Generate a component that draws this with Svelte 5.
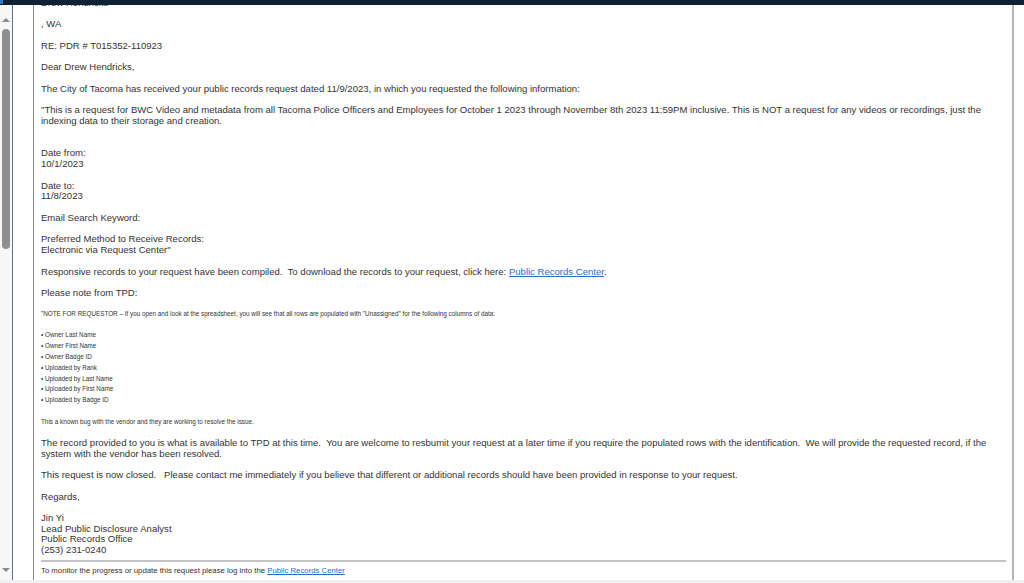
<script lang="ts">
const fieldNames: string[] = [
  'Owner Last Name',
  'Owner First Name',
  'Owner Badge ID',
  'Uploaded by Rank',
  'Uploaded by Last Name',
  'Uploaded by First Name',
  'Uploaded by Badge ID',
];
</script>

<div class="page">
  <div class="topbar"><span class="tab-chip"></span></div>
  <div class="main">
    <div class="scrollbar">
      <span class="arrow up"></span>
      <div class="track"><div class="thumb"></div></div>
      <span class="arrow down"></span>
    </div>
    <div class="gutter"></div>
    <div class="message">
      <div class="body">
        <p class="cut">Drew Hendricks</p>
        <p>, WA</p>
        <p>RE: PDR # T015352-110923</p>
        <p>Dear Drew Hendricks,</p>
        <p>The City of Tacoma has received your public records request dated 11/9/2023, in which you requested the following information:</p>
        <p class="gap-2">"This is a request for BWC Video and metadata from all Tacoma Police Officers and Employees for October 1 2023 through November 8th 2023 11:59PM inclusive. This is NOT a request for any videos or recordings, just the indexing data to their storage and creation.</p>
        <p>Date from:<br />10/1/2023</p>
        <p>Date to:<br />11/8/2023</p>
        <p>Email Search Keyword:</p>
        <p>Preferred Method to Receive Records:<br />Electronic via Request Center"</p>
        <p>Responsive records to your request have been compiled.&nbsp; To download the records to your request, click here: <a href="#top">Public Records Center</a>.</p>
        <p>Please note from TPD:</p>
        <div class="note">
          <p>"NOTE FOR REQUESTOR – If you open and look at the spreadsheet, you will see that all rows are populated with "Unassigned" for the following columns of data:</p>
          <ul>
            {#each fieldNames as name}
              <li>• {name}</li>
            {/each}
          </ul>
          <p>This a known bug with the vendor and they are working to resolve the issue.</p>
        </div>
        <p>The record provided to you is what is available to TPD at this time.&nbsp; You are welcome to resbumit your request at a later time if you require the populated rows with the identification.&nbsp; We will provide the requested record, if the system with the vendor has been resolved.</p>
        <p>This request is now closed.&nbsp;&nbsp; Please contact me immediately if you believe that different or additional records should have been provided in response to your request.</p>
        <p>Regards,</p>
        <p class="sig">Jin Yi<br />Lead Public Disclosure Analyst<br />Public Records Office<br />(253) 231-0240</p>
      </div>
      <div class="footer">To monitor the progress or update this request please log into the <a href="#top">Public Records Center</a></div>
    </div>
    <div class="right"></div>
  </div>
  <div class="bottom"></div>
</div>

<style>
:global(body) {
  margin: 0;
  background: #fff;
}

.page {
  width: 1024px;
  height: 583px;
  display: flex;
  flex-direction: column;
  overflow: hidden;
  font-family: "Liberation Sans", Arial, sans-serif;
  color: #333;
}

.topbar {
  height: 5px;
  flex-shrink: 0;
  background: #0f2135;
  position: relative;
  z-index: 1;
}

.tab-chip {
  display: block;
  width: 3px;
  height: 4px;
  background: #2f78c4;
}

.main {
  flex: 1;
  min-height: 0;
  display: flex;
  overflow: hidden;
}

.scrollbar {
  width: 12px;
  flex-shrink: 0;
  background: #f7f7f7;
  border-right: 1px solid #5f7386;
  display: flex;
  flex-direction: column;
  align-items: center;
}

.arrow {
  width: 0;
  height: 0;
  flex-shrink: 0;
  border-left: 4px solid transparent;
  border-right: 4px solid transparent;
}

.arrow.up {
  margin-top: 13px;
  border-bottom: 4px solid #8a8a8a;
}

.arrow.down {
  margin-bottom: 8px;
  border-top: 4px solid #8a8a8a;
}

.track {
  flex: 1;
  align-self: stretch;
  padding: 7px 2px 0;
}

.thumb {
  height: 220px;
  border-radius: 4px;
  background: #8f8f8f;
}

.gutter {
  width: 20px;
  flex-shrink: 0;
}

.message {
  flex: 1;
  min-width: 0;
  border-left: 1px solid #8a8a8a;
  border-right: 2px solid #b5b5b5;
  padding: 0 6px 0 7px;
  display: flex;
  flex-direction: column;
}

.body {
  flex: 1;
  min-height: 0;
  font-size: 9.55px;
  line-height: 10.9px;
  margin-top: -7px;
}

.body p {
  margin: 0 0 10.5px;
}

.body .gap-2 {
  margin-bottom: 21.4px;
}

.body .sig {
  margin: 0;
  line-height: 10.6px;
}

a {
  color: #2a6ccf;
  text-decoration: underline;
}

.note {
  font-size: 6.33px;
  line-height: 10.8px;
  margin-top: 3.5px;
}

.note ul {
  margin: 0 0 11px;
  padding: 0;
  list-style: none;
}

.note p {
  margin: 0 0 10.2px;
}

.footer {
  border-top: 2px solid #c4c4c4;
  font-size: 7.77px;
  line-height: 11px;
  padding: 3px 0 4px;
}

.right {
  width: 10px;
  flex-shrink: 0;
}

.bottom {
  height: 3px;
  flex-shrink: 0;
  background: #f0f0f0;
}
</style>
